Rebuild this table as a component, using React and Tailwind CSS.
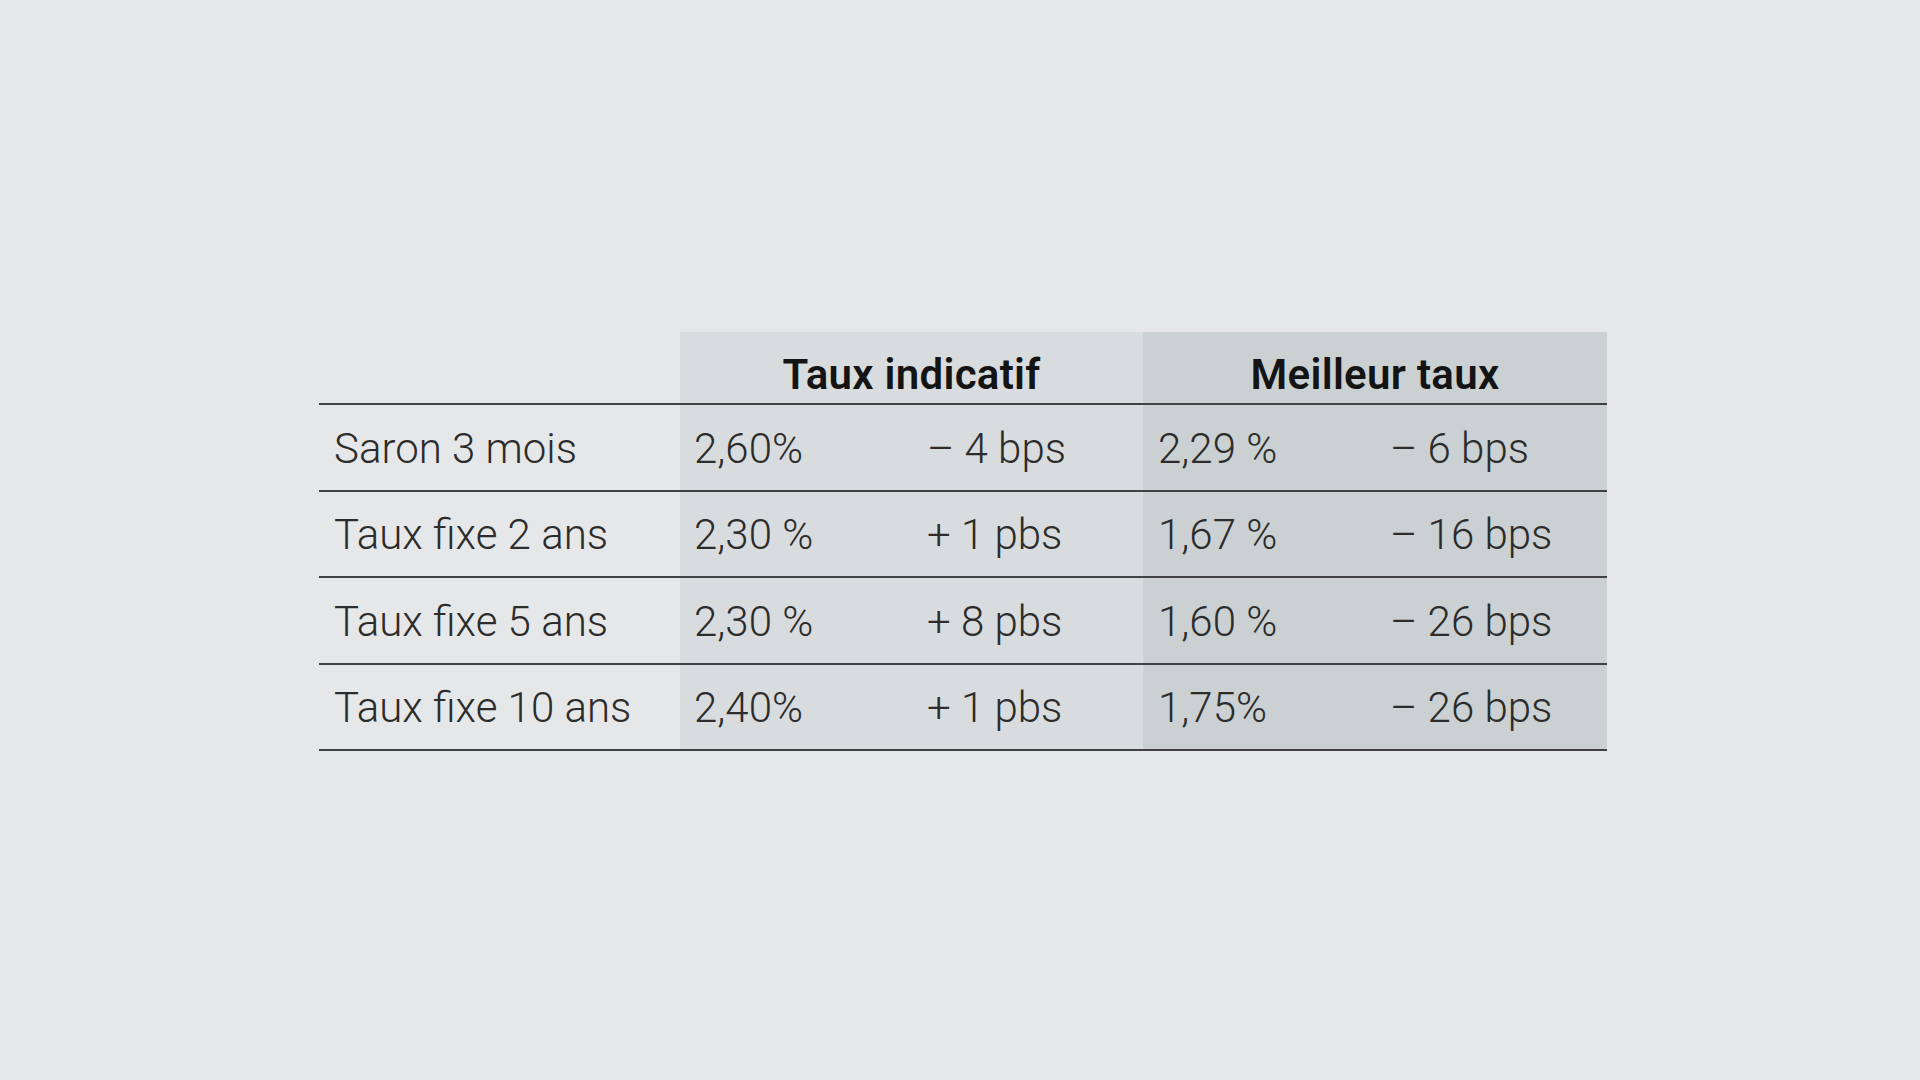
import React from 'react';

const rows = [
  { label: 'Saron 3 mois', ind: '2,60%', indChg: '– 4 bps', best: '2,29 %', bestChg: '– 6 bps' },
  { label: 'Taux fixe 2 ans', ind: '2,30 %', indChg: '+ 1 pbs', best: '1,67 %', bestChg: '– 16 bps' },
  { label: 'Taux fixe 5 ans', ind: '2,30 %', indChg: '+ 8 pbs', best: '1,60 %', bestChg: '– 26 bps' },
  { label: 'Taux fixe 10 ans', ind: '2,40%', indChg: '+ 1 pbs', best: '1,75%', bestChg: '– 26 bps' },
];

const font = { fontFamily: 'Roboto, "Open Sans", sans-serif' };

const App = () => {
  return (
    <div className="min-h-screen w-full bg-[#e6e7e9] pt-[332px] pl-[319px]" style={font}>
      <div className="w-[1288px]">
        {/* header */}
        <div className="grid grid-cols-[361px_463px_464px] h-[73px] border-b-2 border-[#3f4143] overflow-hidden">
          <div />
          <div className="bg-[#d9dcde] flex items-center justify-center pt-[14px]">
            <span className="text-[42px] leading-none font-semibold text-[#141414] tracking-[0.3px]">Taux indicatif</span>
          </div>
          <div className="bg-[#cbd0d2] flex items-center justify-center pt-[14px]">
            <span className="text-[42px] leading-none font-semibold text-[#141414] tracking-[0.3px]">Meilleur taux</span>
          </div>
        </div>

        {rows.map(r => (
          <div key={r.label} className="grid grid-cols-[361px_233px_230px_233px_231px] h-[86.5px] border-b-2 border-[#3f4143] text-[42px] font-light text-[#2c2c2c]">
            <div className="flex items-center pl-[15px] pt-[2px]">{r.label}</div>
            <div className="bg-[#d9dcde] flex items-center pl-[14px] pt-[2px]">{r.ind}</div>
            <div className="bg-[#d9dcde] flex items-center pl-[14px] pt-[2px]">{r.indChg}</div>
            <div className="bg-[#cbd0d2] flex items-center pl-[15px] pt-[2px]">{r.best}</div>
            <div className="bg-[#cbd0d2] flex items-center pl-[14px] pt-[2px]">{r.bestChg}</div>
          </div>
        ))}
      </div>
    </div>
  );
};

export default App;
